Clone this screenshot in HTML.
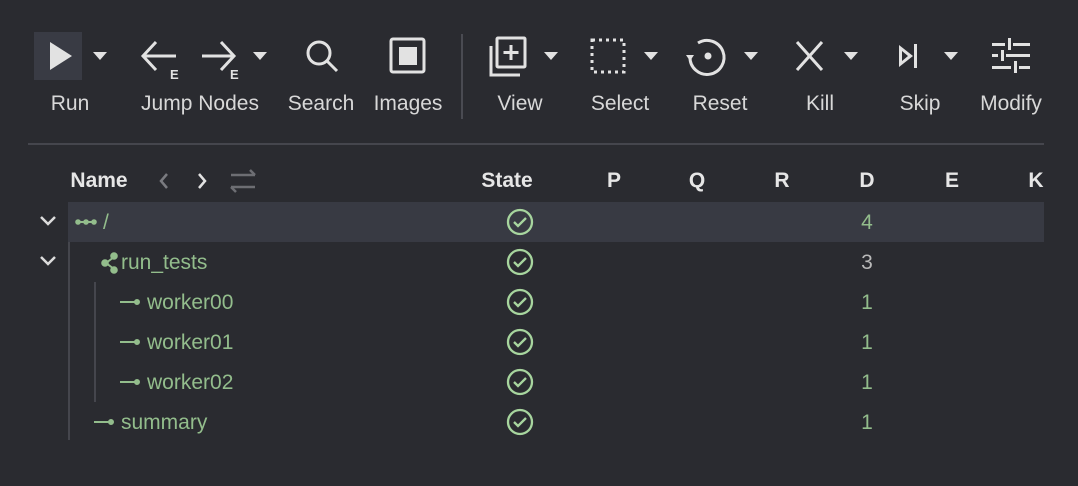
<!DOCTYPE html>
<html><head><style>
body{margin:0;width:1078px;height:486px;background:#2a2b30;font-family:"Liberation Sans",sans-serif;position:relative;overflow:hidden;color:#ddd}
.a{position:absolute}
.lbl{position:absolute;top:92px;font-size:21px;color:#d8d8d8;white-space:nowrap;transform:translateX(-50%)}
.hd{position:absolute;top:169px;font-size:21px;font-weight:bold;color:#e6e6e6;transform:translateX(-50%)}
.t{position:absolute;font-size:21px;color:#93bd8c;white-space:nowrap}
.n{position:absolute;font-size:21px;color:#93bd8c;transform:translateX(-50%)}
svg{position:absolute;overflow:visible}
</style></head><body>
<div class="a" style="left:34px;top:32px;width:48px;height:48px;background:#393b44"></div>
<svg width="1078" height="486" style="left:0;top:0">
<g fill="#e2e2e2" stroke="none">
<path d="M50 42 L72 56 L50 70Z"/>
<path d="M93 52h14l-7 8z"/><path d="M253 52h14l-7 8z"/><path d="M544 52h14l-7 8z"/>
<path d="M644 52h14l-7 8z"/><path d="M744 52h14l-7 8z"/><path d="M844 52h14l-7 8z"/><path d="M944 52h14l-7 8z"/>
<path d="M899 45 L913 56 L899 67Z M902 51 L902 61 L908 56Z" fill-rule="evenodd"/>
<rect x="914" y="44" width="3" height="24"/>
<circle cx="708" cy="56" r="3.5"/>
<path d="M686 55 l8 0 l-4 6z"/>
<rect x="399" y="47" width="18" height="18"/>
</g>
<g fill="none" stroke="#e2e2e2" stroke-width="3">
<path d="M176 56H143M156 42L143 56L156 70"/>
<path d="M202 56H234M221 42L234 56L221 70"/>
<circle cx="319" cy="53" r="11"/><path d="M327 61L337 71"/>
<rect x="391" y="39" width="33" height="33" rx="2"/>
<path d="M491 46V75H520"/><rect x="497" y="38" width="28" height="29" rx="1"/><path d="M511 45V60M503.5 52.5H518.5"/>
<rect x="592" y="40" width="32" height="32" stroke-dasharray="3 4"/>
<path d="M690 57 A17 17 0 1 0 698 43"/>
<path d="M797 42L822 70M822 42L797 70"/>
</g>
<g fill="#e2e2e2">
<rect x="992" y="43" width="13" height="3"/><rect x="1013" y="43" width="17" height="3"/><rect x="1008" y="38" width="3" height="12"/>
<rect x="992" y="54" width="6" height="3"/><rect x="1006" y="54" width="24" height="3"/><rect x="1001" y="50" width="3" height="11"/>
<rect x="992" y="66" width="19" height="3"/><rect x="1019" y="66" width="11" height="3"/><rect x="1014" y="61" width="3" height="12"/>
</g>
<g fill="#e2e2e2" font-family="Liberation Sans" font-weight="bold" font-size="13"><text x="170" y="79">E</text><text x="230" y="79">E</text></g>
<rect x="461" y="34" width="2" height="85" fill="#4a4b52"/>
<rect x="28" y="143" width="1016" height="2" fill="#45464d"/>
<rect x="68" y="202" width="976" height="40" fill="#383a43"/>
<rect x="68" y="242" width="2" height="198" fill="#45464d"/>
<rect x="94" y="282" width="2" height="120" fill="#45464d"/>
<g fill="none" stroke="#7a7b80" stroke-width="2.5"><path d="M167 174l-6 7 6 7"/></g>
<g fill="none" stroke="#e2e2e2" stroke-width="2.5"><path d="M199 174l6 7-6 7"/></g>
<g fill="none" stroke="#6d6e73" stroke-width="2.5"><path d="M231 175h24M250 170l5 5M255 187h-24M236 192l-5-5"/></g>
<g fill="none" stroke="#dcdcdc" stroke-width="2.5"><path d="M41 217l7 7 7-7M41 257l7 7 7-7"/></g>
<g fill="#93bd8c" stroke="#93bd8c" stroke-width="2">
<path d="M76 222h20"/><circle cx="78" cy="222" r="1.8"/><circle cx="86" cy="222" r="1.8"/><circle cx="94" cy="222" r="1.8"/>
<path d="M106 263L114 257M106 263L114 269" fill="none"/><circle cx="105" cy="263" r="2.8"/><circle cx="114" cy="256" r="2.8"/><circle cx="114" cy="270" r="2.8"/>
<path d="M120 302h16M120 342h16M120 382h16M94 422h16"/>
<circle cx="137" cy="302" r="2"/><circle cx="137" cy="342" r="2"/><circle cx="137" cy="382" r="2"/><circle cx="111" cy="422" r="2"/>
</g>
<g fill="none" stroke="#a7d59e" stroke-width="2.3">
<circle cx="520" cy="222" r="12"/><path d="M514 222l4 4 8-8"/>
<circle cx="520" cy="262" r="12"/><path d="M514 262l4 4 8-8"/>
<circle cx="520" cy="302" r="12"/><path d="M514 302l4 4 8-8"/>
<circle cx="520" cy="342" r="12"/><path d="M514 342l4 4 8-8"/>
<circle cx="520" cy="382" r="12"/><path d="M514 382l4 4 8-8"/>
<circle cx="520" cy="422" r="12"/><path d="M514 422l4 4 8-8"/>
</g>
</svg>
<div class="lbl" style="left:70px">Run</div>
<div class="lbl" style="left:200px">Jump Nodes</div>
<div class="lbl" style="left:321px">Search</div>
<div class="lbl" style="left:408px">Images</div>
<div class="lbl" style="left:520px">View</div>
<div class="lbl" style="left:620px">Select</div>
<div class="lbl" style="left:720px">Reset</div>
<div class="lbl" style="left:820px">Kill</div>
<div class="lbl" style="left:920px">Skip</div>
<div class="lbl" style="left:1011px">Modify</div>
<div class="hd" style="left:99px">Name</div>
<div class="hd" style="left:507px">State</div>
<div class="hd" style="left:614px">P</div>
<div class="hd" style="left:697px">Q</div>
<div class="hd" style="left:782px">R</div>
<div class="hd" style="left:867px">D</div>
<div class="hd" style="left:952px">E</div>
<div class="hd" style="left:1036px">K</div>
<div class="t" style="left:103px;top:211px">/</div>
<div class="t" style="left:121px;top:251px">run_tests</div>
<div class="t" style="left:147px;top:291px">worker00</div>
<div class="t" style="left:147px;top:331px">worker01</div>
<div class="t" style="left:147px;top:371px">worker02</div>
<div class="t" style="left:121px;top:411px">summary</div>
<div class="n" style="left:867px;top:211px">4</div>
<div class="n" style="left:867px;top:251px;color:#b9b9b9">3</div>
<div class="n" style="left:867px;top:291px">1</div>
<div class="n" style="left:867px;top:331px">1</div>
<div class="n" style="left:867px;top:371px">1</div>
<div class="n" style="left:867px;top:411px">1</div>
</body></html>
